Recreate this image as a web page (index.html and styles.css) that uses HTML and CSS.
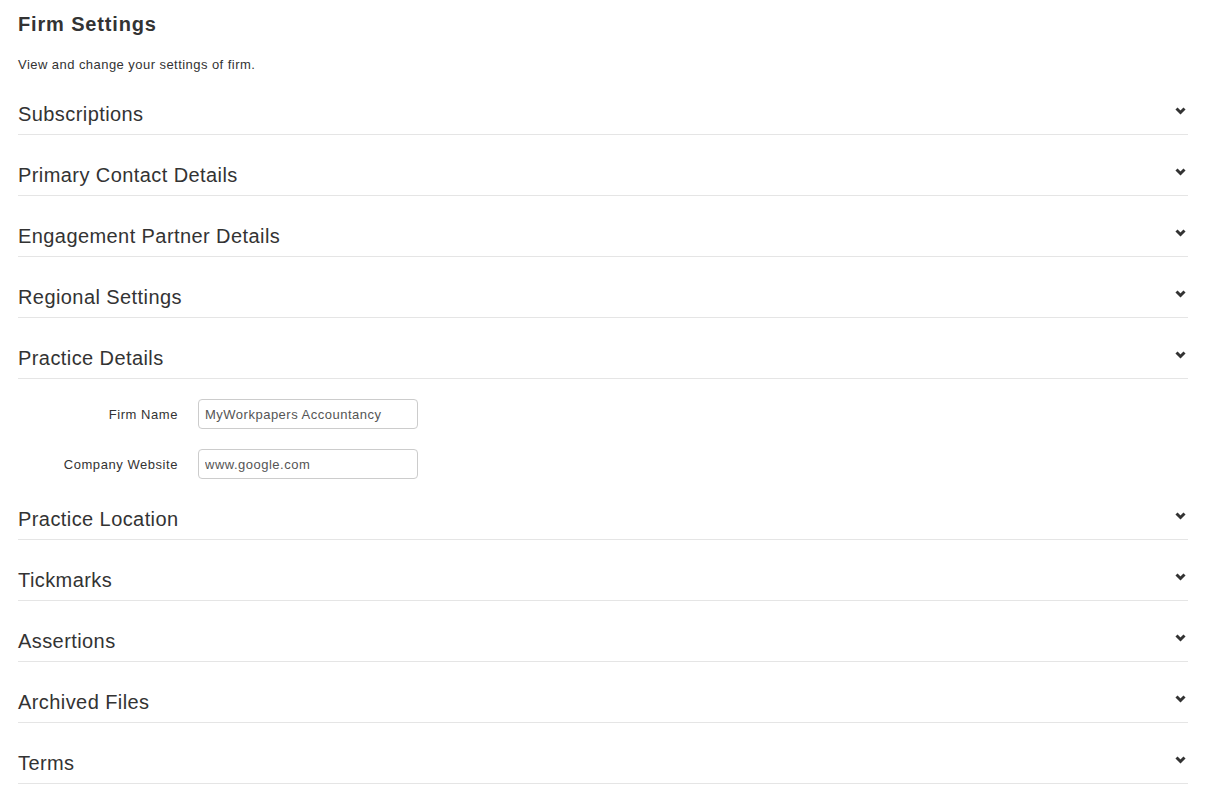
FILE: index.html
```html
<!DOCTYPE html>
<html lang="en">
<head>
    <meta charset="UTF-8">
    <title>Firm Settings</title>
    <link rel="stylesheet" href="styles.css">
</head>
<body>
<div class="page">
    <h3 class="title">Firm Settings</h3>
    <p class="subtitle">View and change your settings of firm.</p>

    <div class="section">
        <div class="section-head"><span>Subscriptions</span><svg class="chevron" viewBox="0 0 11 8"><polyline points="1.5,1.5 5.5,5.5 9.5,1.5"/></svg></div>
    </div>
    <div class="section">
        <div class="section-head"><span>Primary Contact Details</span><svg class="chevron" viewBox="0 0 11 8"><polyline points="1.5,1.5 5.5,5.5 9.5,1.5"/></svg></div>
    </div>
    <div class="section">
        <div class="section-head"><span>Engagement Partner Details</span><svg class="chevron" viewBox="0 0 11 8"><polyline points="1.5,1.5 5.5,5.5 9.5,1.5"/></svg></div>
    </div>
    <div class="section">
        <div class="section-head"><span>Regional Settings</span><svg class="chevron" viewBox="0 0 11 8"><polyline points="1.5,1.5 5.5,5.5 9.5,1.5"/></svg></div>
    </div>
    <div class="section">
        <div class="section-head"><span>Practice Details</span><svg class="chevron" viewBox="0 0 11 8"><polyline points="1.5,1.5 5.5,5.5 9.5,1.5"/></svg></div>
        <form class="section-body">
            <div class="form-row">
                <label for="firmName">Firm Name</label>
                <input type="text" id="firmName" value="MyWorkpapers Accountancy">
            </div>
            <div class="form-row">
                <label for="website">Company Website</label>
                <input type="text" id="website" value="www.google.com">
            </div>
        </form>
    </div>
    <div class="section">
        <div class="section-head"><span>Practice Location</span><svg class="chevron" viewBox="0 0 11 8"><polyline points="1.5,1.5 5.5,5.5 9.5,1.5"/></svg></div>
    </div>
    <div class="section">
        <div class="section-head"><span>Tickmarks</span><svg class="chevron" viewBox="0 0 11 8"><polyline points="1.5,1.5 5.5,5.5 9.5,1.5"/></svg></div>
    </div>
    <div class="section">
        <div class="section-head"><span>Assertions</span><svg class="chevron" viewBox="0 0 11 8"><polyline points="1.5,1.5 5.5,5.5 9.5,1.5"/></svg></div>
    </div>
    <div class="section">
        <div class="section-head"><span>Archived Files</span><svg class="chevron" viewBox="0 0 11 8"><polyline points="1.5,1.5 5.5,5.5 9.5,1.5"/></svg></div>
    </div>
    <div class="section">
        <div class="section-head"><span>Terms</span><svg class="chevron" viewBox="0 0 11 8"><polyline points="1.5,1.5 5.5,5.5 9.5,1.5"/></svg></div>
    </div>
</div>
</body>
</html>
```

FILE: styles.css
```css
body {
    margin: 0;
    font-family: "Liberation Sans", Arial, sans-serif;
    font-size: 13px;
    color: #333;
    background: #fff;
}
.page {
    width: 1170px;
    padding: 0 18px;
}
.title {
    margin: 13px 0 0;
    font-size: 20px;
    line-height: 22px;
    font-weight: bold;
    letter-spacing: 0.85px;
}
.subtitle {
    margin: 21px 0 1px;
    font-size: 13px;
    line-height: 18px;
    letter-spacing: 0.45px;
}
.section-head {
    display: flex;
    justify-content: space-between;
    align-items: center;
    margin-top: 18px;
    padding: 11px 0 9px;
    border-bottom: 1px solid #e5e5e5;
    font-size: 20px;
    line-height: 22px;
    letter-spacing: 0.42px;
    cursor: pointer;
}
.chevron {
    width: 11px;
    height: 8px;
    margin-right: 2px;
    margin-bottom: 7px;
    fill: none;
    stroke: #333;
    stroke-width: 3;
}
.section-body {
    padding-top: 20px;
}
.form-row {
    display: flex;
    align-items: center;
    margin-bottom: 20px;
}
.form-row:last-child {
    margin-bottom: 0;
}
.form-row label {
    width: 160px;
    padding-right: 20px;
    text-align: right;
    font-size: 13px;
    letter-spacing: 0.55px;
}
.form-row input {
    width: 220px;
    height: 30px;
    padding: 5px 6px;
    box-sizing: border-box;
    border: 1px solid #ccc;
    border-radius: 4px;
    font-family: "Liberation Sans", Arial, sans-serif;
    font-size: 13px;
    letter-spacing: 0.5px;
    color: #555;
}
```
